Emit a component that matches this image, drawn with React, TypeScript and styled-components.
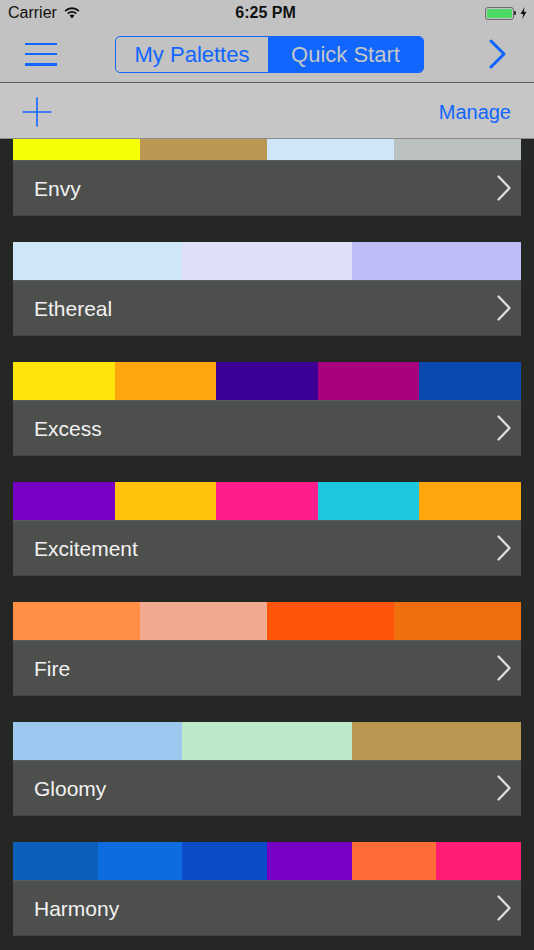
import React from "react";
import styled, { createGlobalStyle } from "styled-components";

const Global = createGlobalStyle`
  html, body { margin: 0; padding: 0; background: #252725; }
  * { box-sizing: border-box; }
`;

const BLUE = "#1166ff";
const FONT = `"Liberation Sans", Arial, sans-serif`;

const Screen = styled.div`
  width: 534px;
  height: 950px;
  display: flex;
  flex-direction: column;
  overflow: hidden;
  font-family: ${FONT};
  background: #252725;
`;

const Header = styled.header`
  background: #c2c2c2;
  border-bottom: 1px solid #5e5e5e;
`;

const StatusBar = styled.div`
  height: 26px;
  display: flex;
  align-items: center;
  padding: 0 7px 0 8px;
  font-size: 16px;
  color: #111;
`;

const Carrier = styled.span`
  display: flex;
  align-items: center;
  gap: 7px;
  flex: 1;
`;

const Time = styled.span`
  font-weight: bold;
  font-size: 16px;
  flex: none;
  margin-right: 4px;
`;

const StatusRight = styled.span`
  flex: 1;
  display: flex;
  justify-content: flex-end;
  align-items: center;
  gap: 6px;
`;

const Battery = styled.span`
  width: 29px;
  height: 13px;
  border: 1px solid #6a6a6a;
  border-radius: 3px;
  padding: 1px;
  display: flex;
  position: relative;
  &::before {
    content: "";
    flex: 1;
    background: #4cd964;
    border-radius: 1.5px;
  }
  &::after {
    content: "";
    position: absolute;
    right: -3px;
    top: 3.5px;
    width: 2px;
    height: 4px;
    background: #333;
    border-radius: 0 1px 1px 0;
  }
`;

const NavBar = styled.nav`
  height: 56px;
  display: flex;
  align-items: center;
  padding: 0 27px 0 25px;
`;

const Hamburger = styled.button`
  width: 32px;
  height: 23px;
  padding: 0;
  border: none;
  background: none;
  display: flex;
  flex-direction: column;
  justify-content: space-between;
  span {
    display: block;
    height: 2.5px;
    background: ${BLUE};
  }
`;

const Segmented = styled.div`
  margin-left: 58px;
  margin-top: 1px;
  display: flex;
  width: 309px;
  height: 37px;
  border: 1.5px solid ${BLUE};
  border-radius: 5px;
  overflow: hidden;
`;

const Segment = styled.div<{ $active?: boolean }>`
  flex: ${(p) => (p.$active ? "0 0 155px" : "1")};
  display: flex;
  align-items: center;
  justify-content: center;
  font-size: 22px;
  padding-top: 1px;
  color: ${(p) => (p.$active ? "#c6c6c6" : BLUE)};
  background: ${(p) => (p.$active ? BLUE : "transparent")};
`;

const NavNext = styled.svg`
  margin-left: auto;
  display: block;
`;

const Toolbar = styled.div`
  height: 56px;
  background: #c6c6c6;
  border-bottom: 1px solid #8c8c8c;
  display: flex;
  align-items: center;
  justify-content: space-between;
  padding: 3px 23px 0 22px;
`;

const Manage = styled.span`
  color: ${BLUE};
  font-size: 20px;
  margin-top: 1px;
`;

const List = styled.div`
  flex: 1;
  overflow: hidden;
  padding: 0 13px;
`;

const ListInner = styled.div`
  margin-top: -17px;
  display: flex;
  flex-direction: column;
  gap: 26px;
`;

const Card = styled.div`
  display: flex;
  flex-direction: column;
`;

const Swatch = styled.div`
  height: 38px;
  display: flex;
`;

const Chip = styled.div`
  flex: 1;
`;

const Row = styled.div`
  height: 56px;
  background: #4d4f4c;
  border-top: 1px solid #5a5d5e;
  border-bottom: 1px solid #424441;
  display: flex;
  align-items: center;
  justify-content: space-between;
  padding: 0 10px 0 21px;
`;

const Name = styled.span`
  color: #f2f2f2;
  font-size: 21px;
  margin-top: 1px;
`;

const palettes: { name: string; colors: string[] }[] = [
  { name: "Envy", colors: ["#f5ff05", "#bb9751", "#cfe5f8", "#bbc1c0"] },
  { name: "Ethereal", colors: ["#cfe5f8", "#dfdff8", "#bdbbf8"] },
  { name: "Excess", colors: ["#ffe40d", "#ffa50d", "#3d0097", "#aa007e", "#0a4ab0"] },
  { name: "Excitement", colors: ["#7700c4", "#ffc30d", "#ff1d8b", "#1cc8e0", "#ffa50d"] },
  { name: "Fire", colors: ["#ff8e46", "#f1aa8f", "#ff550a", "#f06e0c"] },
  { name: "Gloomy", colors: ["#9cc7ee", "#bde9c9", "#bb9751"] },
  { name: "Harmony", colors: ["#0d5fba", "#0d6ce0", "#0a4dc6", "#7700c4", "#ff6c38", "#ff1d75"] },
];

const Wifi = () => (
  <svg width="16" height="12" viewBox="0 0 16 12">
    <path d="M8 11.5 L5.6 8.6 A3.6 3.6 0 0 1 10.4 8.6 Z" fill="#111" />
    <path d="M3.7 6.6 A6.2 6.2 0 0 1 12.3 6.6" stroke="#111" strokeWidth="1.8" fill="none" />
    <path d="M1.2 4 A9.8 9.8 0 0 1 14.8 4" stroke="#111" strokeWidth="1.8" fill="none" />
  </svg>
);

const Bolt = () => (
  <svg width="7" height="12" viewBox="0 0 7 12">
    <path d="M4.5 0 L0.5 7 H3.2 L2.3 12 L6.5 4.8 H3.8 Z" fill="#111" />
  </svg>
);

const RowChevron = () => (
  <svg width="14" height="26" viewBox="0 0 14 26">
    <path d="M1.5 1.5 L12.5 13 L1.5 24.5" stroke="#dcdcdc" strokeWidth="2.4" fill="none" strokeLinecap="round" strokeLinejoin="round" />
  </svg>
);

export default function App() {
  return (
    <Screen>
      <Global />
      <Header>
        <StatusBar>
          <Carrier>
            Carrier <Wifi />
          </Carrier>
          <Time>6:25 PM</Time>
          <StatusRight>
            <Battery />
            <Bolt />
          </StatusRight>
        </StatusBar>
        <NavBar>
          <Hamburger aria-label="Menu">
            <span />
            <span />
            <span />
          </Hamburger>
          <Segmented>
            <Segment>My Palettes</Segment>
            <Segment $active>Quick Start</Segment>
          </Segmented>
          <NavNext width="18" height="30" viewBox="0 0 18 30">
            <path d="M2 2 L15 15 L2 28" stroke={BLUE} strokeWidth="3" fill="none" strokeLinecap="round" strokeLinejoin="round" />
          </NavNext>
        </NavBar>
      </Header>
      <Toolbar>
        <svg width="30" height="30" viewBox="0 0 30 30">
          <path d="M15 0.5 V29.5 M0.5 15 H29.5" stroke={BLUE} strokeWidth="1.6" fill="none" />
        </svg>
        <Manage>Manage</Manage>
      </Toolbar>
      <List>
        <ListInner>
          {palettes.map((p) => (
            <Card key={p.name}>
              <Swatch>
                {p.colors.map((c, i) => (
                  <Chip key={i} style={{ background: c }} />
                ))}
              </Swatch>
              <Row>
                <Name>{p.name}</Name>
                <RowChevron />
              </Row>
            </Card>
          ))}
        </ListInner>
      </List>
    </Screen>
  );
}
